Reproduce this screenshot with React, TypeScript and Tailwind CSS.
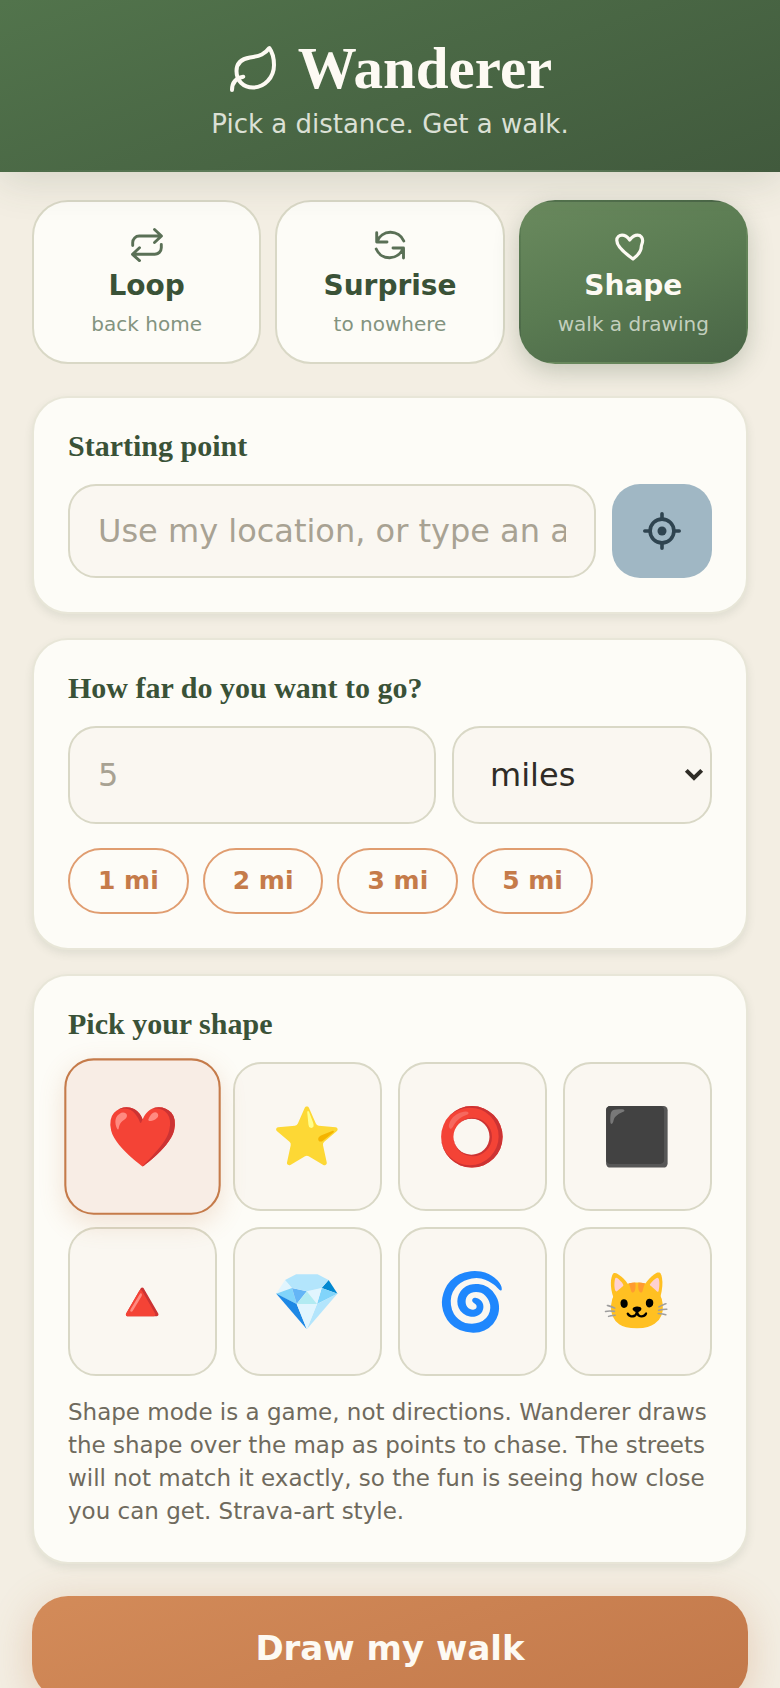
import { useState } from "react";

const modes = [
  { id: "loop", name: "Loop", hint: "back home" },
  { id: "surprise", name: "Surprise", hint: "to nowhere" },
  { id: "shape", name: "Shape", hint: "walk a drawing" },
];

const shapes = [
  { name: "Heart", glyph: "❤️" },
  { name: "Star", glyph: "⭐" },
  { name: "Circle", glyph: "⭕" },
  { name: "Square", glyph: "⬛" },
  { name: "Triangle", glyph: "🔺" },
  { name: "Diamond", glyph: "💎" },
  { name: "Spiral", glyph: "🌀" },
  { name: "Cat", glyph: "🐱" },
];

const stroke = {
  fill: "none",
  stroke: "currentColor",
  strokeLinecap: "round" as const,
  strokeLinejoin: "round" as const,
};

function LeafIcon() {
  return (
    <svg viewBox="0 0 48 48" className="size-12" strokeWidth="4" aria-hidden="true" {...stroke}>
      <path d="M41.3 4C37 10 32 12 22 13.500C12.500 15 8.500 20 8.500 27C8.500 37 15.500 43.500 25 43.500C36.500 43.500 46 33.500 46 21C46 13 43.500 7 41.300 4Z" />
      <path d="M4 46C4 39 7.500 34 15.300 32.700" />
    </svg>
  );
}

function ModeIcon({ id }: { id: string }) {
  if (id === "loop") {
    return (
      <svg viewBox="0 0 36 36" className="size-9" strokeWidth="2.900" aria-hidden="true" {...stroke}>
        <path d="M25.500 3.500 32.500 10l-7 6.500M3.700 19.500V16.500A6.500 6.500 0 0 1 10.200 10H32" />
        <path d="M10.500 21.700 3.500 28.300l7 6.300M32.300 18.500V21.800a6.500 6.500 0 0 1-6.500 6.500H4" />
      </svg>
    );
  }
  if (id === "surprise") {
    return (
      <svg viewBox="0 0 36 36" className="size-9" strokeWidth="2.900" aria-hidden="true" {...stroke}>
        <path d="M31.800 15A14.500 14.500 0 0 0 5 15.500M4.700 6.700V16H15" />
        <path d="M4.200 23A14.500 14.500 0 0 0 31 22.500M31.500 32V22H21" />
      </svg>
    );
  }
  return (
    <svg viewBox="0 0 36 36" className="size-9" strokeWidth="3.200" aria-hidden="true" {...stroke}>
      <path d="M18 33C11 28 1.800 20.500 1.800 14.500C1.800 10.800 4.500 9.200 7 9.200C10.500 9.200 12.500 11 14.700 14C17.500 10.500 20 9.200 22.500 9.200C26 9.200 27.800 12 27.600 15C27.600 17.500 26.300 18.500 26.300 20.500C26.300 25 22 30 18 33Z" />
    </svg>
  );
}

function LocateIcon() {
  return (
    <svg viewBox="0 0 40 40" className="size-10" strokeWidth="3.600" aria-hidden="true" {...stroke}>
      <circle cx="20" cy="20" r="11.900" />
      <circle cx="20" cy="20" r="4.500" fill="currentColor" stroke="none" />
      <path d="M20 2.800V7.500M20 32.500V37.200M2.800 20H7.500M32.500 20H37.200" />
    </svg>
  );
}

const card =
  "rounded-[36px] border-2 border-[#e8e6d8] bg-[#fdfcf7] p-[34px] shadow-[0_4px_8px_rgba(61,82,54,0.10)]";
const heading = "font-['Liberation_Serif',serif] text-[30px] leading-7 font-bold text-[#3a5237]";
const field =
  "min-w-0 rounded-[28px] border-2 border-[#d9d8c6] bg-[#faf7f1] px-7 text-[32px] text-[#2f2c26] placeholder:text-[#a8a293]";

export default function App() {
  const [mode, setMode] = useState("shape");
  const [shape, setShape] = useState("Heart");
  const [distance, setDistance] = useState("");

  return (
    <div className="min-h-screen bg-[#f3eee3] font-['DejaVu_Sans',sans-serif]">
      <header className="relative flex flex-col items-center bg-linear-160 from-[#52744c] to-[#415a3d] pt-9 pb-[30px] shadow-[0_8px_40px_rgba(61,82,54,0.16)]">
        <h1 className="flex items-center gap-[22px] font-['Liberation_Serif',serif] text-[59px] leading-16 font-bold text-[#fdfaf3]">
          <LeafIcon />
          Wanderer
        </h1>
        <p className="mt-1.5 text-[26px] leading-9 text-[#dbe0d5]">Pick a distance. Get a walk.</p>
        <div className="absolute inset-x-0 bottom-0 h-0.5 bg-linear-to-r from-transparent via-[#6f8c69] to-transparent" />
      </header>

      <main className="flex flex-col gap-6 px-8 pt-7 pb-12">
        <div className="mb-2 grid grid-cols-3 gap-3.5">
          {modes.map((m) => (
            <button
              key={m.id}
              type="button"
              aria-pressed={mode === m.id}
              onClick={() => setMode(m.id)}
              className={
                mode === m.id
                  ? "flex flex-col items-center rounded-[36px] border-2 border-transparent bg-linear-160 from-[#6a8a5e] via-[#5a7b52] to-[#496546] pt-6 pb-[26px] text-[#fdfaf3] shadow-[0_8px_24px_rgba(61,82,54,0.25)]"
                  : "flex flex-col items-center rounded-[36px] border-2 border-[#d9d8c6] bg-[#fdfcf7] pt-6 pb-[26px] text-[#3a5237]"
              }
            >
              <span className={mode === m.id ? "" : "text-[#5a7056]"}>
                <ModeIcon id={m.id} />
              </span>
              <span className="mt-1.5 text-[28px] leading-9 font-bold">{m.name}</span>
              <span
                className={
                  mode === m.id
                    ? "mt-2 text-[20px] leading-6 text-[#c3cfbe]"
                    : "mt-2 text-[20px] leading-6 text-[#83937f]"
                }
              >
                {m.hint}
              </span>
            </button>
          ))}
        </div>

        <section className={card}>
          <label htmlFor="start" className={`${heading} block`}>
            Starting point
          </label>
          <div className="mt-6 flex gap-4">
            <input
              id="start"
              type="text"
              placeholder="Use my location, or type an address"
              className={`${field} h-[94px] flex-1`}
            />
            <button
              type="button"
              aria-label="Use my location"
              className="flex w-[100px] items-center justify-center rounded-[28px] bg-[#a0b7c4] text-[#2f4450]"
            >
              <LocateIcon />
            </button>
          </div>
        </section>

        <section className={card}>
          <label htmlFor="distance" className={`${heading} block`}>
            How far do you want to go?
          </label>
          <div className="mt-6 flex gap-4">
            <input
              id="distance"
              type="text"
              inputMode="decimal"
              placeholder="5"
              value={distance}
              onChange={(e) => setDistance(e.target.value)}
              className={`${field} h-[98px] flex-1`}
            />
            <div className="relative w-[260px]">
              <select aria-label="Unit" className={`${field} h-[98px] w-full appearance-none pl-9`}>
                <option>miles</option>
                <option>km</option>
              </select>
              <svg
                viewBox="0 0 20 14"
                className="pointer-events-none absolute top-[42px] right-2 h-3.5 w-5 text-[#2f2c26]"
                fill="none"
                stroke="currentColor"
                strokeWidth="4"
                aria-hidden="true"
              >
                <path d="M2.300 2.300 10 10 17.700 2.300" />
              </svg>
            </div>
          </div>
          <div className="mt-6 flex flex-wrap gap-3.5">
            {["1", "2", "3", "5"].map((n) => (
              <button
                key={n}
                type="button"
                onClick={() => setDistance(n)}
                className="h-[66px] rounded-full border-2 border-[#e09d70] px-7 text-[25px] font-bold text-[#c57b4a]"
              >
                {n} mi
              </button>
            ))}
          </div>
        </section>

        <section className={card}>
          <h2 className={heading}>Pick your shape</h2>
          <div className="mt-6 grid grid-cols-4 gap-4 font-['Noto_Color_Emoji',sans-serif] text-[56px] leading-none">
            {shapes.map((s) => (
              <button
                key={s.name}
                type="button"
                aria-label={s.name}
                aria-pressed={shape === s.name}
                onClick={() => setShape(s.name)}
                className={
                  shape === s.name
                    ? "flex aspect-square scale-105 items-center justify-center rounded-[28px] border-2 border-[#c57b4a] bg-[#f8ede5] shadow-[0_8px_24px_rgba(197,123,74,0.20)]"
                    : "flex aspect-square items-center justify-center rounded-[28px] border-2 border-[#d9d8c6] bg-[#faf7f1]"
                }
              >
                {s.glyph}
              </button>
            ))}
          </div>
          <p className="mt-5 text-[23px] leading-[33px] text-[#6f6a5d]">
            Shape mode is a game, not directions. Wanderer draws the shape over the map as points to
            chase. The streets will not match it exactly, so the fun is seeing how close you can get.
            Strava-art style.
          </p>
        </section>

        <button
          type="button"
          className="mt-2 h-[104px] rounded-[36px] bg-linear-160 from-[#d38b59] to-[#c2784a] text-[34px] font-bold text-[#fdfaf3] shadow-[0_8px_40px_rgba(197,123,74,0.30)]"
        >
          Draw my walk
        </button>
      </main>
    </div>
  );
}
